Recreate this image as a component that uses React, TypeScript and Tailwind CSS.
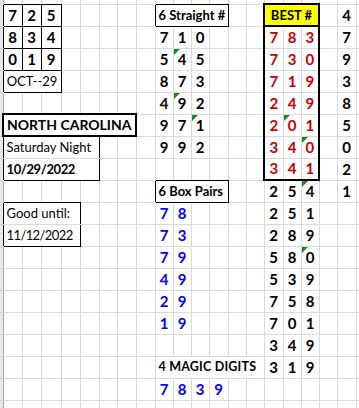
import React from 'react';

type Cell = { t: string; span?: number; cls: string; tri?: boolean };

// spreadsheet grid: 20 visible columns, one partial row on top, 19 full rows
const NC = 20;
const NR = 19;

const colW = [
  'w-[19px]', 'w-[19px]', 'w-[20px]', 'w-[19px]', 'w-[19px]', 'w-[18px]', 'w-[19px]',
  'w-[19px]', 'w-[18px]', 'w-[18px]', 'w-[18px]', 'w-[19px]', 'w-[18px]', 'w-[18px]',
  'w-[19px]', 'w-[18px]', 'w-[18px]', 'w-[18px]', 'w-[19px]', 'w-[19px]',
];

const DIG = 'font-bold text-[15px] text-center text-black';
const RED = 'font-bold text-[15px] text-center text-[#c80000]';
const BLUE = 'font-bold text-[15px] text-center text-[#0000ff]';
const LABEL = 'font-bold text-[13px] text-left pl-[3px] text-black';
const NOTE = 'font-normal text-[13px] text-left pl-[3px] text-black';

const cells: Record<string, Cell> = {};
const put = (r: number, c: number, t: string, cls: string, span = 1, tri = false) => {
  cells[`${r}-${c}`] = { t, cls, span, tri };
};
const digits = (r: number, c: number, s: string, cls: string, tri: number[] = []) => {
  s.split('').forEach((d, i) => put(r, c + i, d, cls, 1, tri.includes(i)));
};

// left block
digits(0, 0, '725', DIG);
digits(1, 0, '834', DIG);
digits(2, 0, '019', DIG);
put(3, 0, 'OCT--29', 'font-normal text-[13px] text-center text-black', 3);
put(5, 0, 'NORTH CAROLINA', 'font-bold text-[14px] text-left pl-[3px] text-black', 7);
put(6, 0, 'Saturday Night', NOTE, 5);
put(7, 0, '10/29/2022', 'font-bold text-[13px] text-left pl-[3px] text-black tracking-[-0.4px]', 5);
put(9, 0, 'Good until:', NOTE, 4);
put(10, 0, '11/12/2022', 'font-normal text-[13px] text-left pl-[3px] text-black tracking-[-0.6px]', 4);

// straight numbers
put(0, 8, '6 Straight #', LABEL, 4);
digits(1, 8, '710', DIG);
digits(2, 8, '545', DIG, [1]);
digits(3, 8, '873', DIG);
digits(4, 8, '492', DIG, [1]);
digits(5, 8, '971', DIG, [2]);
digits(6, 8, '992', DIG);

// box pairs
put(8, 8, '6 Box Pairs', LABEL, 4);
['78', '73', '79', '49', '29', '19'].forEach((p, i) => digits(9 + i, 8, p, BLUE));
put(16, 8, '4 MAGIC DIGITS', 'font-bold text-[12.5px] text-left pl-[3px] text-black tracking-[0.2px]', 6);
digits(17, 8, '7839', BLUE);

// best column
put(0, 14, 'BEST #', 'font-bold text-[13px] text-center text-black bg-[#ffff00]', 3);
const best: [string, number[]][] = [
  ['783', []], ['730', []], ['719', []], ['249', []], ['201', [1]], ['340', [2]], ['341', []],
];
best.forEach(([s, t], i) => digits(1 + i, 14, s, RED, t));
const rest: [string, number[]][] = [
  ['254', [2]], ['251', []], ['289', []], ['580', [2]], ['539', []], ['758', []], ['701', []], ['349', []], ['319', []],
];
rest.forEach(([s, t], i) => digits(8 + i, 14, s, DIG, t));
'479385021'.split('').forEach((d, i) => put(i, 18, d, DIG));

// edges: 0 grid, 1 thin black, 2 thick black, 3 header line; row index i = r + 1
const vE: number[][] = Array.from({ length: NR + 1 }, () => Array.from({ length: NC + 1 }, (_, x) => (x === 0 ? 3 : 0)));
const hE: number[][] = Array.from({ length: NR + 2 }, () => Array(NC).fill(0));
const box = (r0: number, r1: number, c0: number, c1: number, w: number) => {
  for (let r = r0; r <= r1; r++) {
    vE[r + 1][c0] = Math.max(vE[r + 1][c0] % 3, w);
    vE[r + 1][c1 + 1] = Math.max(vE[r + 1][c1 + 1] % 3, w);
  }
  for (let c = c0; c <= c1; c++) {
    hE[r0 + 1][c] = Math.max(hE[r0 + 1][c], w);
    hE[r1 + 2][c] = Math.max(hE[r1 + 2][c], w);
  }
};
for (let r = 0; r < 3; r++) for (let c = 0; c < 3; c++) box(r, r, c, c, 1);
box(3, 3, 0, 2, 1);
box(5, 5, 0, 6, 2);
box(6, 7, 0, 4, 1);
box(9, 10, 0, 3, 1);
box(0, 0, 8, 11, 1);
box(8, 8, 8, 11, 1);
box(0, 7, 14, 16, 2);
box(0, 0, 14, 16, 2);

const L = ['border-l border-l-[#dadada]', 'border-l border-l-black', 'border-l-2 border-l-black', 'border-l border-l-[#a9a9a9]'];
const R = ['border-r border-r-[#dadada]', 'border-r border-r-black', 'border-r-2 border-r-black', 'border-r border-r-[#a9a9a9]'];
const T = ['border-t border-t-[#dadada]', 'border-t border-t-black', 'border-t-2 border-t-black'];
const B = ['border-b border-b-[#dadada]', 'border-b border-b-black', 'border-b-2 border-b-black'];

function Row({ i }: { i: number }) {
  const r = i - 1;
  const tds: React.ReactNode[] = [
    <td key="g" className={`p-0 bg-[#e8e8e8] border-l-0 ${i === 0 ? 'border-t-0' : 'border-t border-t-[#cfcfcf]'} border-b border-b-[#cfcfcf] ${R[vE[i][0]]}`} />,
  ];
  for (let c = 0; c < NC; ) {
    const cell = cells[`${r}-${c}`];
    const span = cell?.span ?? 1;
    const top = i === 0 ? 'border-t-0' : T[hE[i][c]];
    const cls = [
      'relative p-0 leading-none whitespace-nowrap overflow-visible',
      L[vE[i][c]], R[vE[i][c + span]], top, B[hE[i + 1][c]],
      cell?.cls ?? '',
    ].join(' ');
    tds.push(
      <td key={c} colSpan={span} className={cls}>
        {cell?.tri && (
          <span className="absolute left-0 top-0 h-0 w-0 border-t-[6px] border-r-[6px] border-t-[#178a17] border-r-transparent" />
        )}
        {cell?.t}
      </td>
    );
    c += span;
  }
  return <tr className={i === 0 ? 'h-[4px]' : 'h-[22px]'}>{tds}</tr>;
}

export default function App() {
  return (
    <div className="h-[408px] w-[359px] overflow-hidden bg-white font-[Lato,sans-serif]">
      <table className="w-[375px] table-fixed border-collapse">
        <colgroup>
          <col className="w-[3px]" />
          {colW.map((w, k) => (
            <col key={k} className={w} />
          ))}
        </colgroup>
        <tbody>
          {Array.from({ length: NR + 1 }, (_, i) => (
            <Row key={i} i={i} />
          ))}
        </tbody>
      </table>
    </div>
  );
}
